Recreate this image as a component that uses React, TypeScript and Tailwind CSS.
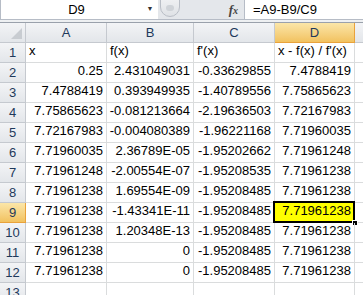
import * as React from 'react';

const rows: string[][] = [
  ['x', 'f(x)', "f'(x)", "x - f(x) / f'(x)"],
  ['0.25', '2.431049031', '-0.33629855', '7.4788419'],
  ['7.4788419', '0.393949935', '-1.40789556', '7.75865623'],
  ['7.75865623', '-0.081213664', '-2.19636503', '7.72167983'],
  ['7.72167983', '-0.004080389', '-1.96221168', '7.71960035'],
  ['7.71960035', '2.36789E-05', '-1.95202662', '7.71961248'],
  ['7.71961248', '-2.00554E-07', '-1.95208535', '7.71961238'],
  ['7.71961238', '1.69554E-09', '-1.95208485', '7.71961238'],
  ['7.71961238', '-1.43341E-11', '-1.95208485', '7.71961238'],
  ['7.71961238', '1.20348E-13', '-1.95208485', '7.71961238'],
  ['7.71961238', '0', '-1.95208485', '7.71961238'],
  ['7.71961238', '0', '-1.95208485', '7.71961238'],
  ['', '', '', ''],
];

const cols = ['A', 'B', 'C', 'D'];

const hdr = 'bg-gradient-to-b from-[#f3f4f6] to-[#e3e6ea] border-r border-b border-[#c5c9cf] text-[#1e395b]';
const hdrOn = 'bg-gradient-to-b from-[#fbe6a8] to-[#f2c25f] border-r border-b border-[#e9a23b] text-[#1e395b]';

export default function App() {
  return (
    <div className="w-[363px] h-[295px] overflow-hidden bg-white font-['Liberation_Sans',Arial,sans-serif] text-[13px] text-black">
      {/* Formula bar */}
      <div className="flex h-[20px] border-b border-[#b6bcc6]">
        <div className="w-[158px] flex items-center bg-white border-l border-[#b6bcc6]">
          <span className="flex-1 text-center pl-[10px]">D9</span>
          <span className="w-[16px] text-[7px] text-[#333] text-center">▼</span>
        </div>
        <div className="relative flex-1 flex bg-[#e4e7eb]">
          <div className="absolute left-[2px] top-[-11px] w-[20px] h-[28px] rounded-full border border-[#b9bec6] bg-gradient-to-b from-[#f7f8f9] to-[#dfe2e6] flex items-end justify-center pb-[5px]">
            <div className="w-[8px] h-[6px] rounded-full bg-[#cfd3d8]" />
          </div>
          <div className="w-[86px] flex items-center justify-end pr-[6px]">
            <span className="font-['Liberation_Serif',serif] italic font-bold text-[13px] text-[#444]">f<span className="text-[10px]">x</span></span>
          </div>
          <div className="flex-1 bg-white border-l border-[#b6bcc6] flex items-center pl-[8px]">=A9-B9/C9</div>
        </div>
      </div>
      <div className="h-[3px] bg-[#eef0f2] border-b border-[#9aa1ab]" />

      {/* Grid */}
      <div className="grid grid-cols-[26px_81px_87px_81px_80px_1fr]">
        <div className={`relative h-[20px] ${hdr}`}>
          <div className="absolute right-[3px] bottom-[3px] w-0 h-0 border-l-[11px] border-l-transparent border-b-[11px] border-b-[#c8ccd1]" />
        </div>
        {cols.map((c) => (
          <div key={c} className={`h-[20px] flex items-center justify-center ${c === 'D' ? hdrOn : hdr}`}>
            {c}
          </div>
        ))}
        <div className={`h-[20px] ${hdr} border-r-0`} />

        {rows.map((r, i) => {
          const n = i + 1;
          const sel = n === 9;
          return (
            <React.Fragment key={n}>
              <div className={`h-[20px] flex items-center justify-center ${sel ? hdrOn : hdr}`}>{n}</div>
              {r.map((v, j) => {
                const isD9 = sel && j === 3;
                return (
                  <div
                    key={j}
                    className={`relative h-[20px] flex items-end pb-[2px] px-[3px] whitespace-nowrap border-r border-b border-[#dadcdd] ${
                      n === 1 ? 'justify-start' : 'justify-end'
                    } ${isD9 ? 'bg-[#ffff00]' : ''}`}
                  >
                    {v}
                    {isD9 && (
                      <>
                        <div className="absolute left-[-2px] top-[-2px] right-[-1px] bottom-[-1px] border-2 border-black" />
                        <div className="absolute right-[-4px] bottom-[-4px] w-[6px] h-[6px] bg-black border border-white" />
                      </>
                    )}
                  </div>
                );
              })}
              <div className="h-[20px] border-b border-[#dadcdd]" />
            </React.Fragment>
          );
        })}
      </div>
    </div>
  );
}
